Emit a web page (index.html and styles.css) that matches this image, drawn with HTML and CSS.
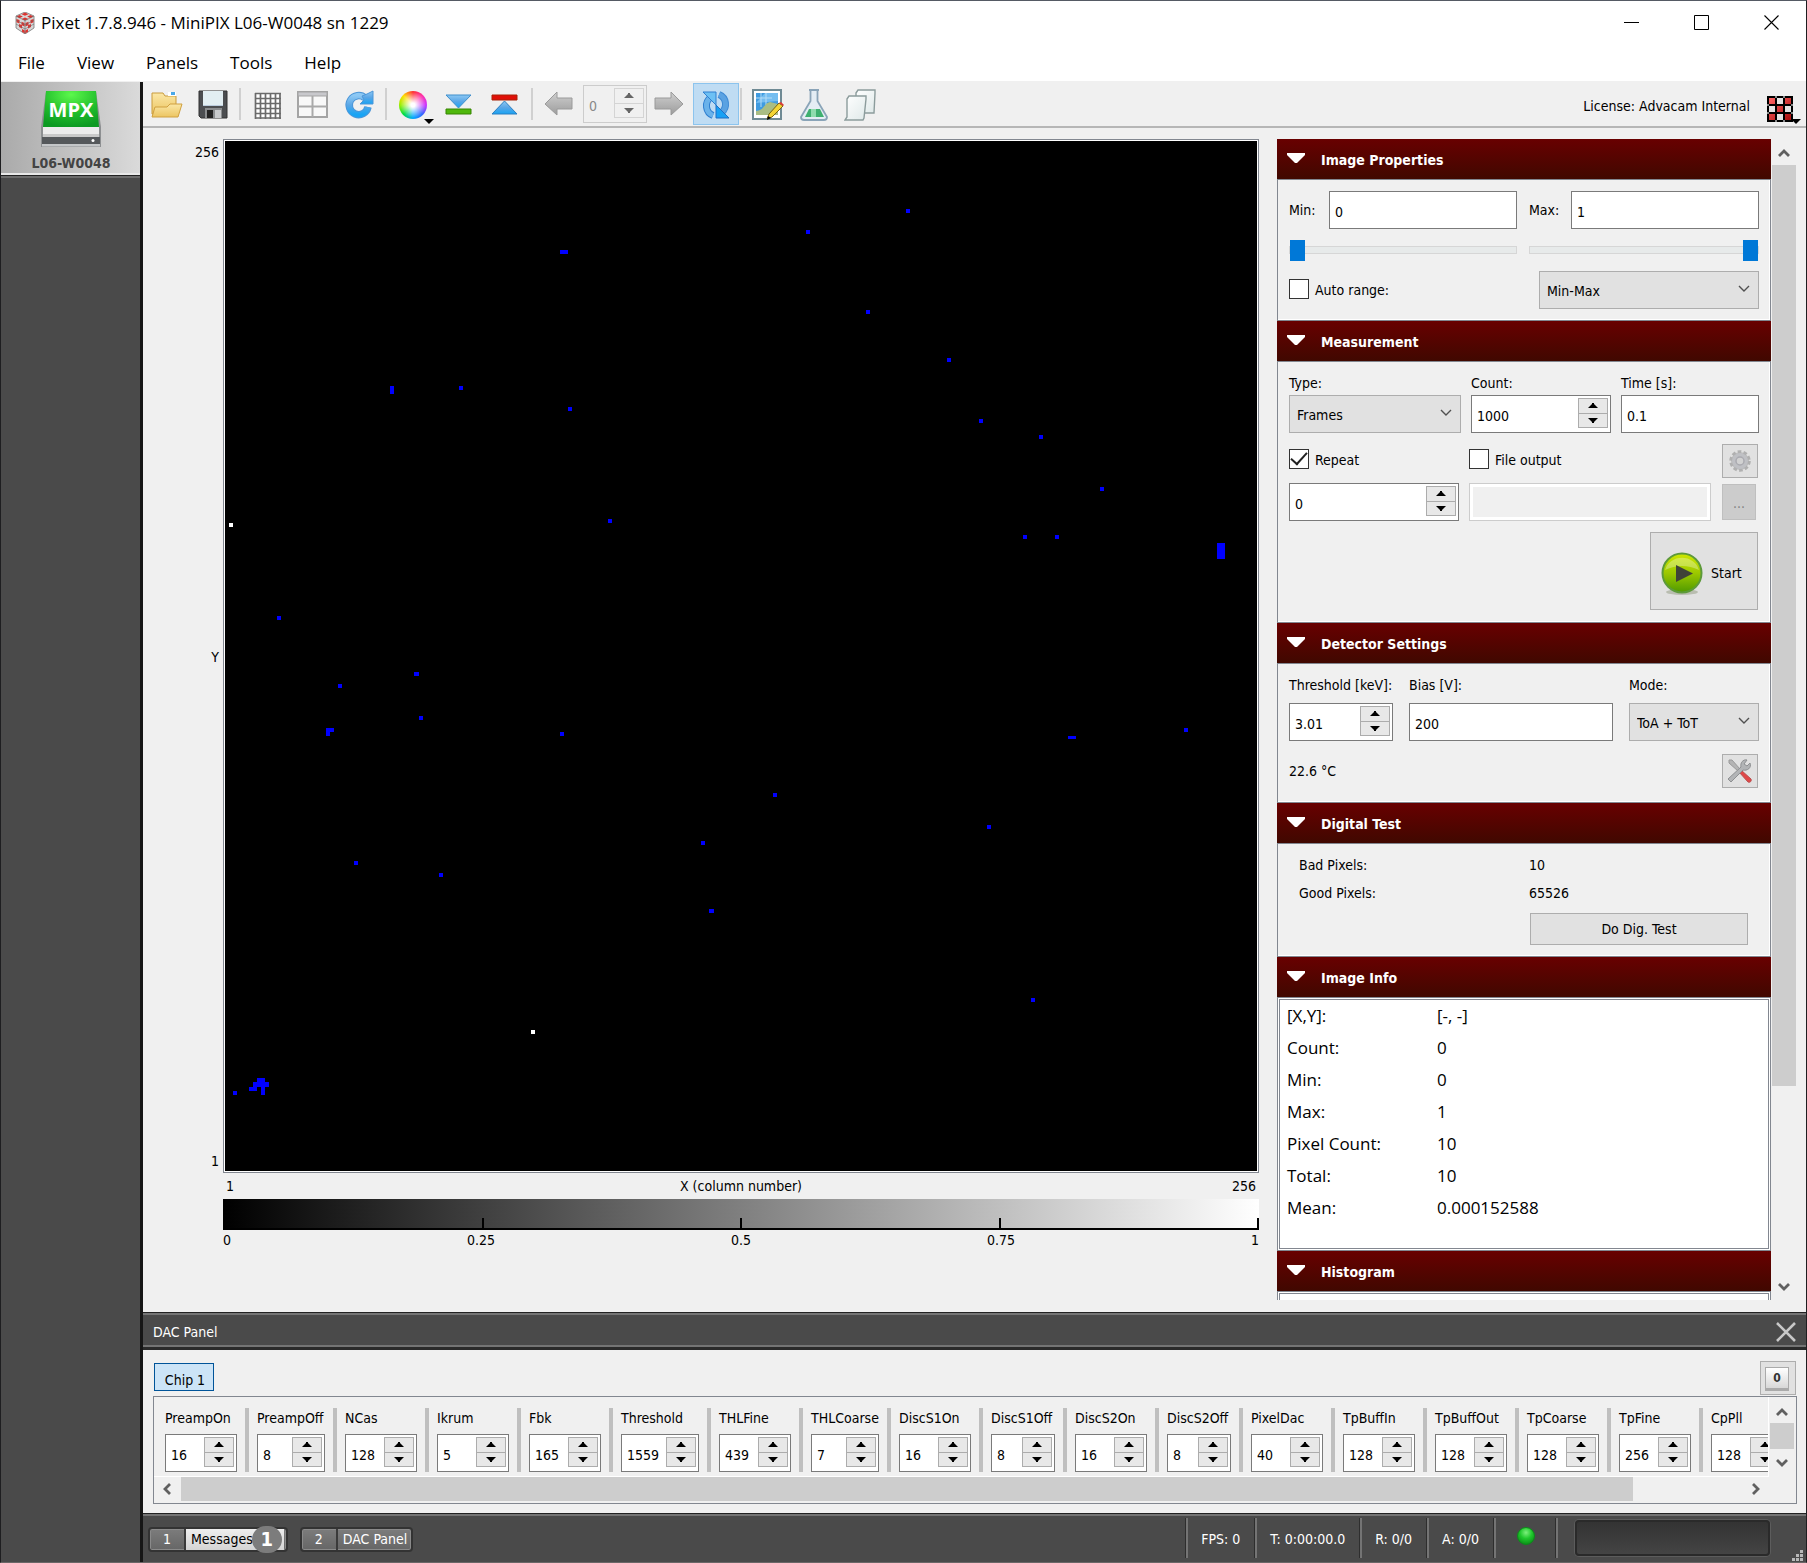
FILE: index.html
```html
<!DOCTYPE html>
<html lang="en">
<head>
<meta charset="utf-8">
<title>Pixet 1.7.8.946 - MiniPIX L06-W0048 sn 1229</title>
<link rel="stylesheet" href="styles.css">
</head>
<body>
<svg class="defs" aria-hidden="true">
  <defs>
    <symbol id="up" viewBox="0 0 10 5"><path d="M0 5h10L6 1V0H4v1z"/></symbol>
    <symbol id="down" viewBox="0 0 10 5"><path d="M0 0h10L6 4v1H4V4z"/></symbol>
    <symbol id="chev" viewBox="0 0 12 12"><path d="M1 3l5 5 5-5" fill="none" stroke="#505050" stroke-width="1.4"/></symbol>
    <symbol id="sb-up" viewBox="0 0 12 12"><path d="M1 9l5-5 5 5" fill="none" stroke="#606060" stroke-width="2.8"/></symbol>
    <symbol id="sb-down" viewBox="0 0 12 12"><path d="M1 3l5 5 5-5" fill="none" stroke="#606060" stroke-width="2.8"/></symbol>
    <symbol id="sb-left" viewBox="0 0 12 12"><path d="M9 1L4 6l5 5" fill="none" stroke="#606060" stroke-width="2.8"/></symbol>
    <symbol id="sb-right" viewBox="0 0 12 12"><path d="M3 1l5 5-5 5" fill="none" stroke="#606060" stroke-width="2.8"/></symbol>
    <symbol id="tri" viewBox="0 0 18 10"><path d="M0 0h18v2L10 10H8L0 2z" fill="#fff"/></symbol>
    <linearGradient id="gBlue" x2="0" y2="1"><stop offset="0" stop-color="#8cc8f4"/><stop offset=".5" stop-color="#5aa6e6"/><stop offset="1" stop-color="#18a4f4"/></linearGradient>
    <linearGradient id="gGrey" x2="0" y2="1"><stop offset="0" stop-color="#cfcfcf"/><stop offset="1" stop-color="#9c9c9c"/></linearGradient>
    <linearGradient id="gFold" x2="0" y2="1"><stop offset="0" stop-color="#fbe7a6"/><stop offset="1" stop-color="#ecc562"/></linearGradient>
    <linearGradient id="gPage" x2="1" y2="1"><stop offset="0" stop-color="#fff"/><stop offset="1" stop-color="#dfe9e9"/></linearGradient>
    <radialGradient id="gMpx" cx=".5" cy=".1" r=".9"><stop offset="0" stop-color="#5cf84c"/><stop offset=".6" stop-color="#1fbb2a"/><stop offset="1" stop-color="#0c9a22"/></radialGradient>
    <linearGradient id="gPlay" x2="0" y2="1"><stop offset="0" stop-color="#cfe800"/><stop offset=".5" stop-color="#9cc800"/><stop offset="1" stop-color="#4f9a00"/></linearGradient>
    <radialGradient id="gLed" cx=".5" cy=".3" r=".7"><stop offset="0" stop-color="#7cf07c"/><stop offset=".5" stop-color="#1fc82c"/><stop offset="1" stop-color="#0b8f18"/></radialGradient>
    <linearGradient id="gRed" x2="1" y2="1"><stop offset="0" stop-color="#f66"/><stop offset="1" stop-color="#a80c0c"/></linearGradient>
  </defs>
</svg>

<div class="window">
  <header class="titlebar">
    <svg class="app-icon" viewBox="0 0 22 22">
      <path d="M11 0l9 4v12l-9 6-9-6V4z" fill="#d8d8d8" stroke="#777" stroke-width=".8"/>
      <g fill="#dc3430"><path d="M11 .6l3.400 1.600-3.400 1.600-3.400-1.600zM5.500 3l3.400 1.600-3.400 1.600-3-1.600zM16.500 3l3 1.600-3 1.600-3.400-1.600zM11 5.400l3.400 1.600-3.400 1.600-3.400-1.600z"/><path d="M2.500 7l3 1v3.500l-3-1.200zM7.500 9.800l3 1.200v3.500l-3-1.500zM5 12l3 1.200v3.300L5 15zM8 17l2.800 1.400v3L8 19.700zM19.500 7l-3 1v3.500l3-1.200zM14.500 9.800L11.500 11v3.500l3-1.500zM17 12l-3 1.200v3.300L17 15zM14 17l-2.800 1.400v3L14 19.700z"/></g>
      <path d="M2 4l9 4.500L20 4M11 8.500V22M2 8l9 5 9-5M2 12l9 5 9-5" fill="none" stroke="#666" stroke-width=".6"/>
    </svg>
    <h1 class="title">Pixet 1.7.8.946 - MiniPIX L06-W0048 sn 1229</h1>
    <div class="win-buttons">
      <button class="win-btn" aria-label="Minimize"><svg viewBox="0 0 16 16"><path d="M0 7.500h15" stroke="#000"/></svg></button>
      <button class="win-btn" aria-label="Maximize"><svg viewBox="0 0 16 16"><path d="M.5.5h14v14H.5z" fill="none" stroke="#000"/></svg></button>
      <button class="win-btn" aria-label="Close"><svg viewBox="0 0 16 16"><path d="M.5.5l14 14M14.500.5l-14 14" stroke="#000" stroke-width="1.100"/></svg></button>
    </div>
  </header>
  <nav class="menubar">
    <button>File</button><button>View</button><button>Panels</button><button>Tools</button><button>Help</button>
  </nav>

  <div class="shell">
    <aside class="devices">
      <button class="device">
        <svg viewBox="0 0 62 60">
          <path d="M6 1h50l5 36v20H1V37z" fill="#8d8f91"/>
          <path d="M6 1h50l3 36H3z" fill="url(#gMpx)"/>
          <path d="M3 37h56v10H3z" fill="#ececec"/><path d="M3 44h56v3H3z" fill="#c9c9c9"/>
          <path d="M2 47h58v9H2z" fill="#55585b"/><path d="M2 54h58v2.500H2z" fill="#c4c6c8"/><circle cx="53" cy="50.500" r="1.500" fill="#fff"/>
          <text x="31" y="27" text-anchor="middle" class="mpx">MPX</text>
        </svg>
        <span>L06-W0048</span>
      </button>
    </aside>

    <div class="main">
      <div class="toolbar">
        <button class="tool" aria-label="Open"><svg viewBox="0 0 32 32"><path d="M1 4h11l2 3h11v18H1z" fill="url(#gFold)" stroke="#c99b3c"/><path d="M17 3h8v4h-8z" fill="#fff"/><path d="M20 3h4v3h-4z" fill="#4aa8e8"/><path d="M1 28l3-10h12l3-3h12l-4 13z" fill="url(#gFold)" stroke="#d0a040"/></svg></button>
        <button class="tool" aria-label="Save"><svg viewBox="0 0 32 32"><path d="M2 2h28v27H4l-2-2z" fill="#4b4d50" stroke="#333"/><path d="M6 2h20v14H6z" fill="#e2eef2"/><path d="M6 16h20v1H6z" fill="#bcd"/><path d="M8 19h17v10H8z" fill="#8a8c8e"/><path d="M10 21h6v8h-6z" fill="#222"/><path d="M18 21h6v8h-6z" fill="#c8cacc"/></svg></button>
        <span class="sep"></span>
        <button class="tool" aria-label="Grid"><svg viewBox="0 0 32 32"><path d="M4 4h25v25H4z" fill="#fff"/><path d="M4 4.500h26M4 9.500h26M4 14.500h26M4 19.500h26M4 24.500h26M4 29h26M4.500 4v26M9.500 4v26M14.500 4v26M19.500 4v26M24.500 4v26M29 4v26" stroke="#6a6a6a" stroke-width="1.700"/></svg></button>
        <button class="tool" aria-label="Layout"><svg viewBox="0 0 32 32"><path d="M1 3h29v25H1z" fill="#f8f8f8" stroke="#a4a4a4" stroke-width="2"/><path d="M1 3h29v4H1z" fill="#c8c8cc" stroke="#a4a4a4"/><path d="M15.500 7v21M1 17.500h29" stroke="#a9a9a9" stroke-width="2"/></svg></button>
        <button class="tool" aria-label="Refresh"><svg viewBox="0 0 32 32"><path d="M22 9A9.500 9.500 0 1 0 25 18" fill="none" stroke="#4c96d8" stroke-width="7.500"/><path d="M22 9A9.500 9.500 0 1 0 25 18" fill="none" stroke="url(#gBlue)" stroke-width="5.500"/><path d="M30 2v13H17l4-4-2-4 5-2z" fill="url(#gBlue)" stroke="#4c96d8"/></svg></button>
        <span class="sep"></span>
        <button class="tool has-menu" aria-label="Color map"><span class="wheel"></span></button>
        <button class="tool" aria-label="Lower limit"><svg viewBox="0 0 32 32"><path d="M3 6h25L15.500 19z" fill="url(#gBlue)" stroke="#3f8fcc"/><path d="M3 20h25v5H3z" fill="#4fb80c" stroke="#368400"/></svg></button>
        <button class="tool" aria-label="Upper limit"><svg viewBox="0 0 32 32"><path d="M3 25h25L15.500 12z" fill="url(#gBlue)" stroke="#2c7fc0"/><path d="M3 6h25v5H3z" fill="#e01008" stroke="#a82208"/></svg></button>
        <span class="sep"></span>
        <button class="tool" aria-label="Previous"><svg viewBox="0 0 32 32"><path d="M2 15L14 3v6h15v11H14v6z" fill="url(#gGrey)" stroke="#9a9a9a"/></svg></button>
        <span class="spin frame-spin disabled"><input type="text" value="0" aria-label="Frame" disabled><span class="arrows"><button disabled aria-label="Up"><svg><use href="#up"/></svg></button><button disabled aria-label="Down"><svg><use href="#down"/></svg></button></span></span>
        <button class="tool" aria-label="Next"><svg viewBox="0 0 32 32"><path d="M29 15L17 3v6H1v11h16v6z" fill="url(#gGrey)" stroke="#9a9a9a"/></svg></button>
        <button class="tool active" aria-label="Auto update"><svg viewBox="0 0 32 32"><g id="half"><path d="M13 26.500A10.500 10.500 0 0 1 10.500 8.500" fill="none" stroke="#2f7fd0" stroke-width="7"/><path d="M13 26.500A10.500 10.500 0 0 1 10.500 8.500" fill="none" stroke="#6ab2ea" stroke-width="5"/><path d="M3 3h13v13z" fill="#6cc0f4" stroke="#2f7fd0"/></g><g transform="rotate(180 16 16)"><path d="M13 26.500A10.500 10.500 0 0 1 10.500 8.500" fill="none" stroke="#3f8ad4" stroke-width="7"/><path d="M13 26.500A10.500 10.500 0 0 1 10.500 8.500" fill="none" stroke="#5aa2e2" stroke-width="5"/><path d="M3 3h13v13z" fill="#18a0f4" stroke="#1f6fc4"/></g></svg></button>
        <span class="sep tight"></span>
        <button class="tool" aria-label="Edit image"><svg viewBox="0 0 32 32"><path d="M1 1h28v29H1z" fill="#fff" stroke="#6f8a94" stroke-width="2"/><path d="M4 4h22v22H4z" fill="#3f9be0"/><path d="M4 14l9-10h13v8z" fill="#74bdf0"/><path d="M9 4v14M14 4v12M4 9h16" stroke="#b4dcf6"/><path d="M4 22c8 0 8-8 14-9l8 2v11H4z" fill="#a9bd84"/><path d="M15 30l2-5L27 14l4 3-11 11z" fill="#f4d536" stroke="#7a6410"/><path d="M27 14l2-1 3 3-1 1z" fill="#e03838"/><path d="M15 31l1-4 3 2z"/></svg></button>
        <button class="tool" aria-label="Analysis"><svg viewBox="0 0 32 32"><path d="M11 1h10M12.500 1v11L3 28c0 2 1 3 3 3h20c2 0 3-1 3-3L19.500 12V1" fill="#e4edf4" stroke="#8aa4b8" stroke-width="1.800"/><path d="M11 20h11l4 8H7z" fill="#3fb070"/><path d="M13 20h5v8h-5z" fill="#8fdcae"/></svg></button>
        <button class="tool" aria-label="Copy"><svg viewBox="0 0 32 32"><path d="M12 4l2-3h17v3l-1 20H12z" fill="url(#gPage)" stroke="#8c9c9c" stroke-width="1.400"/><path d="M3 10l2-3h17v3l-2 19-1 2H1l2-3z" fill="url(#gPage)" stroke="#8c9c9c" stroke-width="1.400"/></svg></button>
        <span class="license">License: Advacam Internal</span>
        <button class="license-btn has-menu" aria-label="License menu"><svg viewBox="0 0 26 26"><path d="M0 0h26v26H0z"/><g fill="url(#gRed)"><path d="M2 2h6v6H2zM18 2h6v6h-6zM10 10h6v6h-6zM2 18h6v6H2zM18 18h6v6h-6z"/></g><g fill="#e4e4e4"><path d="M10 2h6v6h-6zM2 10h6v6H2zM18 10h6v6h-6zM10 18h6v6h-6z"/></g><path d="M8 0h2v2H8zM16 0h2v2h-2zM0 8h2v2H0zM0 16h2v2H0zM24 8h2v2h-2zM24 16h2v2h-2zM8 24h2v2H8zM16 24h2v2h-2z" fill="#888"/></svg></button>
      </div>

      <div class="workspace">
        <section class="plot">
          <div class="y-axis"><span>256</span><span>Y</span><span>1</span></div>
          <div class="frame">
            <svg viewBox="0 0 1032 1030" shape-rendering="crispEdges" role="img" aria-label="Detector image">
              <path d="M0 0h1032v1030H0z"/>
              <path fill="#00f" d="M681 68h4v4h-4zM581 89h4v4h-4zM335 109h8v4h-8zM641 169h4v4h-4zM722 217h4v4h-4zM165 245h4v8h-4zM234 245h4v4h-4zM343 266h4v4h-4zM754 278h4v4h-4zM814 294h4v4h-4zM875 346h4v4h-4zM383 378h4v4h-4zM798 394h4v4h-4zM830 394h4v4h-4zM992 402h8v16h-8zM52 475h4v4h-4zM189 531h5v4h-5zM113 543h4v4h-4zM194 575h4v4h-4zM101 587h8v4h-4v4h-4zM335 591h4v4h-4zM843 595h8v3h-8zM959 587h4v4h-4zM548 652h4v4h-4zM762 684h4v4h-4zM476 700h4v4h-4zM129 720h4v4h-4zM214 732h4v4h-4zM484 768h5v4h-5zM806 857h4v4h-4zM8 950h4v4H8zM32 937h8v4h4v5h-4v8h-4v-8h-4v4h-8v-4h4v-5h4z"/>
              <path fill="#fff" d="M4 382h4v4H4zM306 889h4v4h-4z"/>
            </svg>
          </div>
          <div class="x-axis"><span>1</span><span>X (column number)</span><span>256</span></div>
          <div class="colorbar"><i></i><i></i><i></i><i></i><i></i></div>
          <div class="ticks"><span>0</span><span>0.25</span><span>0.5</span><span>0.75</span><span>1</span></div>
        </section>

        <section class="side">
          <div class="panels">
            <button class="head"><svg><use href="#tri"/></svg>Image Properties</button>
            <div class="body props">
              <div class="range">
                <label for="min">Min:</label><input class="box" id="min" type="text" value="0">
                <input class="slider" type="range" min="0" max="1" value="0" aria-label="Minimum">
              </div>
              <div class="range">
                <label for="max">Max:</label><input class="box" id="max" type="text" value="1">
                <input class="slider" type="range" min="0" max="1" value="1" aria-label="Maximum">
              </div>
              <label class="check"><input type="checkbox">Auto range:</label>
              <span class="select mode-range"><select aria-label="Range mode"><option>Min-Max</option></select><svg><use href="#chev"/></svg></span>
            </div>

            <button class="head"><svg><use href="#tri"/></svg>Measurement</button>
            <div class="body measure">
              <div class="row m-top">
                <div class="field f-type"><label for="type">Type:</label><span class="select"><select id="type"><option>Frames</option></select><svg><use href="#chev"/></svg></span></div>
                <div class="field f-count"><label for="count">Count:</label><span class="spin"><input id="count" type="text" value="1000"><span class="arrows"><button aria-label="Up"><svg><use href="#up"/></svg></button><button aria-label="Down"><svg><use href="#down"/></svg></button></span></span></div>
                <div class="field grow"><label for="time">Time [s]:</label><input class="box" id="time" type="text" value="0.1"></div>
              </div>
              <div class="row m-checks">
                <label class="check c-repeat"><input type="checkbox" checked>Repeat</label>
                <label class="check grow"><input type="checkbox">File output</label>
                <button class="icon-btn" aria-label="Output settings"><svg viewBox="0 0 24 24"><circle cx="12" cy="12" r="9" fill="#bcbcbc" stroke="#b0b0b0" stroke-width="3.500" stroke-dasharray="3.500 2.200"/><circle cx="12" cy="12" r="8" fill="#bfc0c4"/><circle cx="12" cy="12" r="4" fill="#d2d2d2" stroke="#aaaab0" stroke-width="1.500"/></svg></button>
              </div>
              <div class="row m-file">
                <span class="spin s-repeat"><input type="text" value="0" aria-label="Repeat count"><span class="arrows"><button aria-label="Up"><svg><use href="#up"/></svg></button><button aria-label="Down"><svg><use href="#down"/></svg></button></span></span>
                <input class="box file" type="text" disabled aria-label="Output file">
                <button class="dots" disabled>...</button>
              </div>
              <button class="start"><svg viewBox="0 0 44 44"><ellipse cx="22" cy="40" rx="16" ry="3" fill="#b9bdb0"/><circle cx="22" cy="21" r="19.500" fill="url(#gPlay)" stroke="#5d9a3a" stroke-width="2"/><path d="M5 18a17.500 16 0 0 1 34 0q-17-8-34 0z" fill="#fff" opacity=".3"/><path d="M16 13l17 8.500L16 30z" fill="#3f4238"/></svg>Start</button>
            </div>

            <button class="head"><svg><use href="#tri"/></svg>Detector Settings</button>
            <div class="body detector">
              <div class="row d-top">
                <div class="field f-thr"><label for="thr">Threshold [keV]:</label><span class="spin"><input id="thr" type="text" value="3.01"><span class="arrows"><button aria-label="Up"><svg><use href="#up"/></svg></button><button aria-label="Down"><svg><use href="#down"/></svg></button></span></span></div>
                <div class="field grow"><label for="bias">Bias [V]:</label><input class="box" id="bias" type="text" value="200"></div>
                <div class="field f-mode"><label for="mode">Mode:</label><span class="select"><select id="mode"><option>ToA + ToT</option></select><svg><use href="#chev"/></svg></span></div>
              </div>
              <div class="row d-temp"><span class="grow">22.6 °C</span>
                <button class="icon-btn" aria-label="Detector tools"><svg viewBox="0 0 24 24"><path d="M1 1l3 0 8 9-2 2-9-8z" fill="#b4b4b4" stroke="#999"/><path d="M11 13l2-2 10 9c1 2-1 4-3 3z" fill="#e04848" stroke="#b85050"/><path d="M0 20L13 8c-1-4 2-8 6-7l-3 4 3 2 3-3c2 5-3 8-7 7L3 23z" fill="#b2b4b6" stroke="#8e9092"/></svg></button></div>
            </div>

            <button class="head"><svg><use href="#tri"/></svg>Digital Test</button>
            <div class="body digital">
              <span>Bad Pixels:</span><span>10</span>
              <span>Good Pixels:</span><span>65526</span>
              <button class="push">Do Dig. Test</button>
            </div>

            <button class="head"><svg><use href="#tri"/></svg>Image Info</button>
            <div class="body info">
              <table>
                <tr><th>[X,Y]:</th><td>[-, -]</td></tr>
                <tr><th>Count:</th><td>0</td></tr>
                <tr><th>Min:</th><td>0</td></tr>
                <tr><th>Max:</th><td>1</td></tr>
                <tr><th>Pixel Count:</th><td>10</td></tr>
                <tr><th>Total:</th><td>10</td></tr>
                <tr><th>Mean:</th><td>0.000152588</td></tr>
              </table>
            </div>

            <button class="head"><svg><use href="#tri"/></svg>Histogram</button>
            <div class="body info histogram"><div></div></div>
          </div>
          <div class="vscroll"><svg><use href="#sb-up"/></svg><div class="track"><div class="thumb"></div></div><svg><use href="#sb-down"/></svg></div>
        </section>
      </div>

      <div class="dock-head"><h2>DAC Panel</h2><button aria-label="Close panel"><svg viewBox="0 0 20 20"><path d="M1 1l18 18M19 1L1 19" stroke="#c8c8c8" stroke-width="2.600"/></svg></button></div>
      <section class="dac">
        <div class="dac-top"><button class="chip">Chip 1</button><button class="zero" aria-label="Reset"><span>0</span></button></div>
        <div class="dac-frame">
          <div class="dac-row">
            <div class="dac-item w72"><label for="d1">PreampOn</label><span class="spin"><input id="d1" type="text" value="16"><span class="arrows"><button aria-label="Up"><svg><use href="#up"/></svg></button><button aria-label="Down"><svg><use href="#down"/></svg></button></span></span></div>
            <div class="dac-item w68"><label for="d2">PreampOff</label><span class="spin"><input id="d2" type="text" value="8"><span class="arrows"><button aria-label="Up"><svg><use href="#up"/></svg></button><button aria-label="Down"><svg><use href="#down"/></svg></button></span></span></div>
            <div class="dac-item w72"><label for="d3">NCas</label><span class="spin"><input id="d3" type="text" value="128"><span class="arrows"><button aria-label="Up"><svg><use href="#up"/></svg></button><button aria-label="Down"><svg><use href="#down"/></svg></button></span></span></div>
            <div class="dac-item w72"><label for="d4">Ikrum</label><span class="spin"><input id="d4" type="text" value="5"><span class="arrows"><button aria-label="Up"><svg><use href="#up"/></svg></button><button aria-label="Down"><svg><use href="#down"/></svg></button></span></span></div>
            <div class="dac-item w72"><label for="d5">Fbk</label><span class="spin"><input id="d5" type="text" value="165"><span class="arrows"><button aria-label="Up"><svg><use href="#up"/></svg></button><button aria-label="Down"><svg><use href="#down"/></svg></button></span></span></div>
            <div class="dac-item w78"><label for="d6">Threshold</label><span class="spin"><input id="d6" type="text" value="1559"><span class="arrows"><button aria-label="Up"><svg><use href="#up"/></svg></button><button aria-label="Down"><svg><use href="#down"/></svg></button></span></span></div>
            <div class="dac-item w72"><label for="d7">THLFine</label><span class="spin"><input id="d7" type="text" value="439"><span class="arrows"><button aria-label="Up"><svg><use href="#up"/></svg></button><button aria-label="Down"><svg><use href="#down"/></svg></button></span></span></div>
            <div class="dac-item w68"><label for="d8">THLCoarse</label><span class="spin"><input id="d8" type="text" value="7"><span class="arrows"><button aria-label="Up"><svg><use href="#up"/></svg></button><button aria-label="Down"><svg><use href="#down"/></svg></button></span></span></div>
            <div class="dac-item w72"><label for="d9">DiscS1On</label><span class="spin"><input id="d9" type="text" value="16"><span class="arrows"><button aria-label="Up"><svg><use href="#up"/></svg></button><button aria-label="Down"><svg><use href="#down"/></svg></button></span></span></div>
            <div class="dac-item w64"><label for="d10">DiscS1Off</label><span class="spin"><input id="d10" type="text" value="8"><span class="arrows"><button aria-label="Up"><svg><use href="#up"/></svg></button><button aria-label="Down"><svg><use href="#down"/></svg></button></span></span></div>
            <div class="dac-item w72"><label for="d11">DiscS2On</label><span class="spin"><input id="d11" type="text" value="16"><span class="arrows"><button aria-label="Up"><svg><use href="#up"/></svg></button><button aria-label="Down"><svg><use href="#down"/></svg></button></span></span></div>
            <div class="dac-item w64"><label for="d12">DiscS2Off</label><span class="spin"><input id="d12" type="text" value="8"><span class="arrows"><button aria-label="Up"><svg><use href="#up"/></svg></button><button aria-label="Down"><svg><use href="#down"/></svg></button></span></span></div>
            <div class="dac-item w72"><label for="d13">PixelDac</label><span class="spin"><input id="d13" type="text" value="40"><span class="arrows"><button aria-label="Up"><svg><use href="#up"/></svg></button><button aria-label="Down"><svg><use href="#down"/></svg></button></span></span></div>
            <div class="dac-item w72"><label for="d14">TpBuffIn</label><span class="spin"><input id="d14" type="text" value="128"><span class="arrows"><button aria-label="Up"><svg><use href="#up"/></svg></button><button aria-label="Down"><svg><use href="#down"/></svg></button></span></span></div>
            <div class="dac-item w72"><label for="d15">TpBuffOut</label><span class="spin"><input id="d15" type="text" value="128"><span class="arrows"><button aria-label="Up"><svg><use href="#up"/></svg></button><button aria-label="Down"><svg><use href="#down"/></svg></button></span></span></div>
            <div class="dac-item w72"><label for="d16">TpCoarse</label><span class="spin"><input id="d16" type="text" value="128"><span class="arrows"><button aria-label="Up"><svg><use href="#up"/></svg></button><button aria-label="Down"><svg><use href="#down"/></svg></button></span></span></div>
            <div class="dac-item w72"><label for="d17">TpFine</label><span class="spin"><input id="d17" type="text" value="256"><span class="arrows"><button aria-label="Up"><svg><use href="#up"/></svg></button><button aria-label="Down"><svg><use href="#down"/></svg></button></span></span></div>
            <div class="dac-item w72"><label for="d18">CpPll</label><span class="spin"><input id="d18" type="text" value="128"><span class="arrows"><button aria-label="Up"><svg><use href="#up"/></svg></button><button aria-label="Down"><svg><use href="#down"/></svg></button></span></span></div>
          </div>
          <div class="vscroll"><svg><use href="#sb-up"/></svg><div class="track"><div class="thumb"></div></div><svg><use href="#sb-down"/></svg></div>
          <div class="hscroll"><svg><use href="#sb-left"/></svg><div class="track"><div class="thumb"></div></div><svg><use href="#sb-right"/></svg></div>
        </div>
      </section>

      <footer class="status">
        <button class="tab messages"><span class="num">1</span><span class="name">Messages</span><b class="badge">1</b></button>
        <button class="tab"><span class="num">2</span><span class="name">DAC Panel</span></button>
        <span class="cells">
          <span class="cell">FPS: 0</span><span class="cell">T: 0:00:00.0</span><span class="cell">R: 0/0</span><span class="cell">A: 0/0</span>
          <span class="cell led"><svg viewBox="0 0 20 20"><circle cx="10" cy="10" r="8.500" fill="url(#gLed)" stroke="#0c8a1a"/></svg></span>
          <span class="cell meter"><span class="progress"></span></span>
        </span>
        <svg class="grip" viewBox="0 0 11 11"><path d="M8 0h3v3H8zM4 4h3v3H4zM8 4h3v3H8zM0 8h3v3H0zM4 8h3v3H4zM8 8h3v3H8z" fill="#b8b8b8"/></svg>
      </footer>
    </div>
  </div>
</div>
</body>
</html>
```
FILE: styles.css
```css
* { box-sizing: border-box; }
body {
  margin: 0;
  background: #f0f0f0;
  color: #000;
  font: 14px/18px "DejaVu Sans Condensed", "Noto Sans", sans-serif;
}
button, input, select { font: inherit; color: inherit; margin: 0; padding: 0; border: 0; background: none; border-radius: 0; }
h1, h2 { margin: 0; font-size: inherit; font-weight: normal; }
svg { display: block; flex: none; }
.defs { position: absolute; width: 0; height: 0; }
.grow { flex: 1; min-width: 0; }

.window { display: flex; flex-direction: column; height: 100vh; border: 1px solid #1e1e20; border-top-color: #555a64; border-bottom-color: #6b6767; }

/* title and menus */
.titlebar { display: flex; align-items: center; height: 44px; padding-left: 13px; background: #fff; font: 17px/24px "Open Sans", "Noto Sans", sans-serif; }
.app-icon { width: 22px; height: 22px; }
.title { margin-left: 5px; }
.win-buttons { display: flex; margin-left: auto; }
.win-btn { width: 70px; height: 42px; padding-left: 2px; display: grid; place-items: center; }
.win-btn svg { width: 16px; height: 16px; }
.menubar { display: flex; gap: 32px; height: 37px; padding: 0 17px; background: #fff; border-bottom: 1px solid #f0f0f0; font: 17px/34px "Open Sans", "Noto Sans", sans-serif; }

.shell { display: flex; flex: 1; min-height: 0; }
.devices { flex: none; width: 142px; background: #4a4a4a; border-right: 3px solid #161616; }
.device { display: flex; flex-direction: column; align-items: center; gap: 4px; width: 100%; height: 93px; padding: 8px 0 0 1px; background: linear-gradient(90deg, #aaa, #dadada); border-bottom: 2px solid #e8e8e8; box-shadow: 0 1px #222, 0 3px #6c6c6c; font-weight: bold; color: #444; }
.device svg { width: 62px; height: 60px; }
.mpx { font: bold 20px "Open Sans", sans-serif; fill: #fff; }
.main { display: flex; flex-direction: column; flex: 1; min-width: 0; }

/* toolbar */
.toolbar { display: flex; align-items: center; height: 46px; padding: 0 5px 0 1px; border-bottom: 2px solid #b6b6b6; flex: none; }
.tool { position: relative; display: grid; place-items: center; flex: none; width: 46px; height: 42px; padding-top: 2px; }
.tool svg { width: 32px; height: 32px; }
.tool.active { background: #bfdcf3; border: 1px solid #8cc4ee; }
.sep { width: 2px; height: 32px; margin: 0 3px; background: #d0d0d0; }
.sep.tight { margin-left: 1px; }
.wheel { width: 28px; height: 28px; border-radius: 50%; background: radial-gradient(circle, #fff 10%, transparent 65%), conic-gradient(#f33, #f3a, #c3f, #36f, #0af, #0d4, #9e0, #fd0, #f33); }
.has-menu::after { content: ""; position: absolute; right: 2px; bottom: 1px; border: 5px solid transparent; border-top-color: #000; border-bottom: 0; }
.license { margin-left: auto; padding-top: 3px; }
.license-btn { position: relative; width: 51px; height: 42px; padding: 9px 0 0 17px; }
.license-btn svg { width: 26px; height: 26px; }
.license-btn.has-menu::after { right: 0; }

/* form controls */
.box { width: 100%; min-width: 0; height: 38px; padding: 4px 5px 0; background: #fff; border: 1px solid #7a7a7a; }
.box:disabled { background: #f0f0f0; border-color: #ccc; box-shadow: inset 0 0 0 3px #fff; }
.spin { display: flex; width: 100%; height: 38px; padding: 2px 2px 4px 0; background: #fff; border: 1px solid #7a7a7a; }
.spin input { flex: 1; width: 0; min-width: 0; padding: 6px 0 0 5px; }
.arrows { display: grid; flex: none; width: 30px; height: 30px; border: 1px solid #acacac; background: #e8e8e8; }
.arrows button { display: grid; place-items: center; }
.arrows button + button { border-top: 1px solid #acacac; }
.arrows svg { width: 10px; height: 5px; }
.spin.disabled { background: #f0f0f0; border-color: #ccc; color: #888; }
.spin.disabled .arrows { border-color: #d4d4d4; background: #f0f0f0; }
.spin.disabled button + button { border-color: #d4d4d4; }
.spin.disabled svg { fill: #666; }
.frame-spin { flex: none; width: 64px; margin: 0 0 0 1px; }
.select { display: flex; position: relative; }
.select select { appearance: none; width: 100%; height: 38px; padding: 2px 30px 0 7px; background: #e1e1e1; border: 1px solid #adadad; }
.select svg { position: absolute; right: 9px; top: 12px; width: 12px; height: 12px; pointer-events: none; }
.check { display: flex; align-items: center; gap: 6px; }
.check input { appearance: none; width: 20px; height: 20px; margin-bottom: 2px; background: #fff; border: 1px solid #333; display: grid; place-items: center; }
.check input:checked::before { content: ""; width: 14px; height: 7px; margin-top: -5px; border: solid #222; border-width: 0 0 2px 2px; transform: rotate(-48deg); }
.icon-btn { display: grid; place-items: center; width: 36px; height: 34px; background: #e1e1e1; border: 1px solid #adadad; }
.icon-btn svg { width: 24px; height: 24px; }
.slider { appearance: none; width: 100%; height: 21px; }
.slider::-webkit-slider-runnable-track { height: 8px; background: #e7eaea; border: 1px solid #d6d6d6; }
.slider::-webkit-slider-thumb { appearance: none; width: 15px; height: 21px; margin-top: -7px; background: #0078d7; }

/* plot */
.workspace { display: flex; gap: 18px; flex: 1; min-height: 0; padding: 11px 10px 12px 0; }
.plot { flex: 1; min-width: 0; display: grid; grid-template-columns: 80px 1fr; align-content: start; }
.y-axis { display: flex; flex-direction: column; justify-content: space-between; align-items: flex-end; padding: 4px 4px 3px 0; }
.frame { padding: 1px; background: #fff; border: 1px solid #828790; }
.frame svg { width: 100%; height: auto; }
.x-axis, .colorbar, .ticks { grid-column: 2; display: flex; justify-content: space-between; }
.x-axis { padding: 4px 3px; }
.x-axis span { flex: 1; }
.x-axis span:nth-child(2) { text-align: center; }
.x-axis span:last-child { text-align: right; }
.colorbar { align-items: flex-end; height: 31px; background: linear-gradient(90deg, #000, #fff); border-bottom: 2px solid #000; }
.colorbar i { width: 2px; height: 10px; background: #000; }
.ticks { padding-top: 1px; }

/* side panels */
.side { display: flex; gap: 1px; flex: none; width: 519px; min-height: 0; }
.panels { flex: 1; min-width: 0; overflow: hidden; }
.head { display: flex; align-items: center; width: 100%; height: 40px; padding: 2px 10px 0; gap: 16px; background: linear-gradient(#680000, #400800); color: #fff; font-weight: bold; }
.head svg { width: 18px; height: 10px; margin-bottom: 4px; }
.body { border: 1px solid #828790; box-shadow: inset -1px -1px #fff; padding: 11px; }
.row { display: flex; }
.field { display: flex; flex-direction: column; }
.props { display: grid; grid-template-columns: 228px 230px; justify-content: space-between; align-content: start; row-gap: 11px; height: 142px; }
.range { display: grid; grid-template-columns: 40px 1fr; align-items: center; row-gap: 10px; }
.range + .range { grid-template-columns: 42px 1fr; }
.range .slider { grid-column: 1 / 3; }
.mode-range { width: 220px; justify-self: end; }
.measure { height: 262px; padding-top: 12px; }
.m-top { gap: 10px; }
.m-top .field { gap: 3px; }
.f-type { width: 172px; }
.f-count { width: 140px; }
.m-checks { align-items: center; margin-top: 11px; padding-right: 1px; }
.c-repeat { width: 180px; }
.m-checks .check { margin-top: -2px; }
.m-file { margin-top: 5px; gap: 10px; }
.s-repeat { width: 170px; flex: none; }
.file { flex: 1; }
.dots { width: 34px; height: 36px; margin: 1px 3px 0 1px; padding-top: 2px; background: #ccc; border: 1px solid #bfbfbf; color: #838383; }
.start { display: flex; align-items: center; gap: 7px; width: 108px; height: 78px; margin: 11px 1px 0 auto; padding: 3px 0 0 9px; background: #e1e1e1; border: 1px solid #adadad; }
.start svg { width: 44px; height: 44px; margin-top: 2px; }
.detector { height: 140px; padding-top: 12px; }
.d-top .field { gap: 9px; }
.d-top .f-thr { width: 120px; }
.f-thr .spin { width: 104px; }
.f-mode { width: 130px; margin-left: 16px; }
.f-thr label { white-space: nowrap; }
.d-temp { align-items: center; margin-top: 13px; padding-right: 1px; }
.digital { display: grid; grid-template-columns: 230px 1fr; row-gap: 10px; height: 114px; padding: 12px 22px 11px 21px; }
.push { grid-column: 2; height: 32px; margin-left: 1px; background: #e1e1e1; border: 1px solid #adadad; }
.info { height: 254px; padding: 1px; background: #fff; }
.info table, .histogram div { display: block; height: 100%; padding: 0 7px; border: 1px solid #828790; border-collapse: collapse; font: 17px/32px "Open Sans", "Noto Sans", sans-serif; }
.info th { width: 150px; padding: 0; text-align: left; font-weight: normal; }
.info td { padding: 0; }

/* scroll bars */
.vscroll { display: flex; flex-direction: column; align-items: center; width: 24px; padding: 8px 0 7px; gap: 6px; }
.vscroll svg, .hscroll svg { width: 12px; height: 12px; }
.track { flex: 1; align-self: stretch; }
.vscroll .thumb { height: 83%; background: #cdcdcd; }

/* DAC dock */
.dock-head { display: flex; align-items: center; justify-content: space-between; flex: none; height: 38px; padding: 4px 10px 0; background: #4a4a4a; color: #fff; border-top: 1px solid #222; border-bottom: 3px solid #2a2a2a; box-shadow: inset 0 2px #747474, inset 0 -2px #747474; }
.dock-head button svg { width: 20px; height: 20px; }
.dac { flex: none; padding: 11px 9px 9px 10px; }
.dac-top { display: flex; justify-content: space-between; height: 35px; padding-left: 1px; }
.chip { width: 60px; height: 28px; margin-top: 2px; padding: 6px 0 0 2px; background: #cce4f7; border: 1px solid #005499; }
.zero { width: 36px; height: 34px; margin-right: 1px; padding: 5px 6px 3px 4px; background: #e1e1e1; border: 1px solid #adadad; }
.zero span { display: block; height: 24px; background: linear-gradient(#fff, #d8d8d8); border: 1px solid #aaa; border-bottom-width: 3px; font: bold 12px/20px "DejaVu Sans Condensed", sans-serif; color: #333; }
.dac-frame { display: grid; grid-template-columns: minmax(0, 1fr) 27px; border: 1px solid #828790; }
.dac-row { display: flex; gap: 8px; overflow: hidden; height: 80px; padding: 11px 0 0 11px; border: solid #fff; border-width: 0 1px 1px 0; }
.dac-item { flex: none; height: 64px; display: flex; flex-direction: column; justify-content: space-between; white-space: nowrap; }
.dac-item label { padding-top: 1px; }
.dac-item + .dac-item { border-left: 4px solid #bfbfbf; padding-left: 8px; box-sizing: content-box; }
.w64 { width: 64px; } .w68 { width: 68px; } .w72 { width: 72px; } .w78 { width: 78px; }
.dac-frame .vscroll { margin-left: 1px; padding: 9px 0 8px; gap: 5px; }
.dac-frame .vscroll .thumb { height: 26px; }
.hscroll { grid-column: 1 / 3; display: flex; align-items: center; gap: 8px; height: 26px; padding: 0 34px 2px 7px; }
.hscroll .thumb { width: 93%; height: 24px; background: #cdcdcd; }

/* status bar */
.status { position: relative; display: flex; align-items: center; flex: none; height: 49px; padding: 2px 0 0 5px; gap: 12px; background: #4a4a4a; color: #fff; border-top: 1px solid #222; box-shadow: inset 0 2px #747474; }
.tab { display: flex; align-items: center; height: 25px; border: 2px solid #333; border-radius: 4px; background: linear-gradient(#7c7c7c, #666); box-shadow: inset 0 0 0 1px #8a8a8a; }
.num { width: 36px; line-height: 21px; border-right: 2px solid #3a3a3a; }
.name { padding: 0 4px 0 5px; line-height: 21px; }
.messages .name { background: linear-gradient(#eee, #d4d4d4); color: #000; padding: 0 31px 0 5px; margin-right: 2px; }
.messages { position: relative; }
.badge { position: absolute; right: 4px; top: -3px; width: 30px; height: 27px; border-radius: 14px; background: #7c7c7c; font-size: 20px; line-height: 27px; }
.cells { display: flex; align-self: stretch; margin-left: auto; padding: 2px 0 4px; }
.cell { display: flex; align-items: center; padding: 2px 15px 0 13px; border-left: 2px solid #747474; box-shadow: -1px 0 #2e2e2e; }
.led { padding: 0 20px; }
.led svg { width: 20px; height: 20px; margin-bottom: 4px; }
.meter { padding: 0 36px 0 17px; }
.progress { width: 195px; height: 36px; border: 2px solid #2a2a2a; border-radius: 4px; background: linear-gradient(#333, #444); box-shadow: 0 0 0 1px #5c5c5c; }
.grip { position: absolute; right: 3px; bottom: 1px; width: 11px; height: 11px; }
```
